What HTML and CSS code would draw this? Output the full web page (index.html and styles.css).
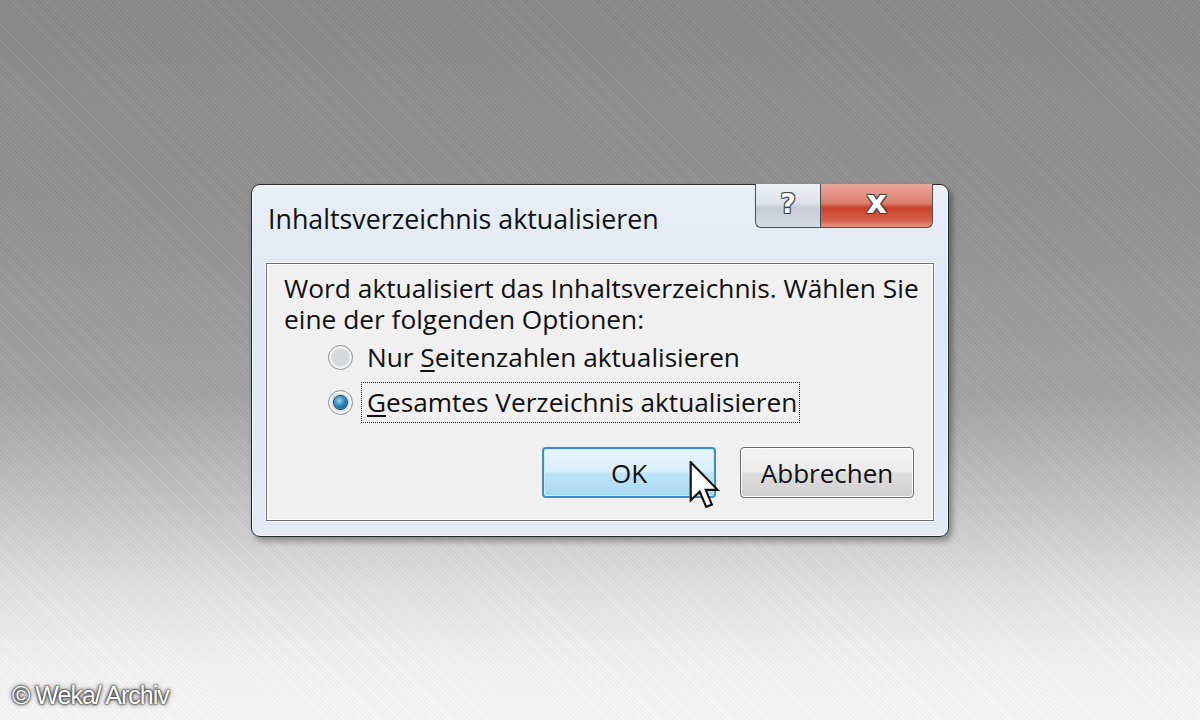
FILE: index.html
```html
<!DOCTYPE html>
<html lang="de">
<head>
    <meta charset="UTF-8">
    <meta name="viewport" content="width=device-width, initial-scale=1.0">
    <title>Inhaltsverzeichnis aktualisieren</title>
    <link rel="stylesheet" href="styles.css">
</head>
<body>
    <div class="window">
        <div class="titlebar">
            <div class="title">Inhaltsverzeichnis aktualisieren</div>
            <div class="controls">
                <div class="ctl-help">?</div>
                <div class="ctl-close">x</div>
            </div>
        </div>
        <div class="client">
            <div class="message">
                <p>Word aktualisiert das Inhaltsverzeichnis. Wählen Sie</p>
                <p>eine der folgenden Optionen:</p>
            </div>
            <div class="options">
                <div class="option">
                    <span class="radio"></span>
                    <span class="label">Nur <u>S</u>eitenzahlen aktualisieren</span>
                </div>
                <div class="option">
                    <span class="radio checked"></span>
                    <span class="label focused"><u>G</u>esamtes Verzeichnis aktualisieren</span>
                </div>
            </div>
            <div class="buttons">
                <div class="btn btn-default">
                    OK
                    <!-- Mauszeiger -->
                    <svg class="cursor" width="32" height="50" viewBox="0 0 13 21">
                        <path d="M0.5 0.5 L0.5 16.5 L4.3 12.9 L7 19.3 L9.4 18.3 L6.8 12.1 L11.8 12.1 Z"
                              fill="#fff" stroke="#111" stroke-width="0.9" stroke-linejoin="miter"/>
                    </svg>
                </div>
                <div class="btn">Abbrechen</div>
            </div>
        </div>
    </div>

    <div class="credit">© Weka/ Archiv</div>
</body>
</html>
```

FILE: styles.css
```css
* {
    margin: 0;
    padding: 0;
    box-sizing: border-box;
}

html, body {
    width: 100%;
    height: 100%;
    overflow: hidden;
}

body {
    font-family: 'Open Sans', 'Noto Sans', sans-serif;
    background-color: #8c8c8c;
    background-image:
        repeating-linear-gradient(45deg, rgba(255,255,255,0.05) 0 1px, rgba(0,0,0,0.03) 1px 3px),
        linear-gradient(to bottom, #8a8a8a 0%, #939393 30%, #a4a4a4 55%, #c6c6c6 70%, #e4e4e4 82%, #f4f4f4 92%, #f8f8f8 100%);
    padding: 184px 0 0 251px;
    position: relative;
}

.window {
    width: 698px;
    height: 353px;
    border: 1px solid #2a2a2a;
    border-radius: 9px;
    background: linear-gradient(to bottom, #e8eef6 0%, #dde7f2 40%, #e2eaf4 100%);
    box-shadow: 3px 4px 6px rgba(0,0,0,0.35), inset 0 0 0 1px #f6f9fc;
    display: flex;
    flex-direction: column;
}

.titlebar {
    height: 78px;
    display: flex;
    justify-content: space-between;
    align-items: flex-start;
    padding: 0 15px 0 16px;
}

.title {
    font-size: 26.8px;
    color: #111;
    margin-top: 15px;
}

.controls {
    display: flex;
    margin-top: -1px;
}

.ctl-help,
.ctl-close {
    height: 44px;
    display: flex;
    align-items: center;
    justify-content: center;
    border: 1px solid #4a4f55;
    border-top: none;
    color: #fff;
    font-family: 'DejaVu Sans', sans-serif;
    font-weight: bold;
    text-shadow: 0 0 1px #333, 1px 1px 0 #444, -1px -1px 0 #444, 1px -1px 0 #444, -1px 1px 0 #444;
}

.ctl-help {
    width: 65px;
    border-radius: 0 0 0 6px;
    border-right: none;
    background: linear-gradient(to bottom, #eef1f5 0%, #dde3ea 45%, #c5ccd5 55%, #d6dce3 100%);
    font-size: 27px;
    padding-bottom: 4px;
}

.ctl-close {
    width: 113px;
    border-radius: 0 0 6px 0;
    background: linear-gradient(to bottom, #eba89b 0%, #dc7d6b 45%, #c9412a 55%, #d8614b 85%, #e49687 100%);
    font-size: 32px;
    padding-bottom: 8px;
}

.client {
    flex: 1;
    margin: 0 14px 15px 14px;
    border: 1px solid #6b6f75;
    box-shadow: inset 0 0 0 1px #fff, 0 0 0 1px #fdfdfd;
    background-color: #f0f0f0;
    padding: 9px 14px 0 17px;
    color: #111;
}

.message {
    font-size: 26.3px;
    line-height: 31px;
    white-space: nowrap;
}

.options {
    padding-left: 44px;
    margin-top: 2px;
    display: flex;
    flex-direction: column;
    gap: 4px;
}

.option {
    display: flex;
    align-items: center;
    gap: 8px;
    font-size: 26.2px;
    height: 41px;
}

.radio {
    width: 25px;
    height: 25px;
    border-radius: 50%;
    border: 1px solid #8b8f94;
    background: radial-gradient(circle at 50% 50%, #d6d8da 0 45%, #eceded 70%, #f8f8f8 100%);
    box-shadow: inset 0 0 0 2px #f4f4f4;
    flex-shrink: 0;
    position: relative;
}

.radio.checked::after {
    content: '';
    position: absolute;
    left: 5px;
    top: 5px;
    width: 13px;
    height: 13px;
    border-radius: 50%;
    background: radial-gradient(circle at 40% 35%, #9fd8f5 0%, #2a8bc4 45%, #0c4d7a 100%);
    box-shadow: 0 0 0 1px #1d3f5a;
}

.label {
    line-height: 33px;
    padding: 3px 2px 3px 5px;
    border: 1px dotted transparent;
    white-space: nowrap;
}

.label.focused {
    border-color: #222;
}

.label u {
    text-underline-offset: 3px;
}

.buttons {
    display: flex;
    justify-content: flex-end;
    gap: 24px;
    margin-top: 24px;
    padding-right: 5px;
}

.btn {
    width: 174px;
    height: 51px;
    border: 1px solid #707070;
    border-radius: 4px;
    box-shadow: inset 0 0 0 1px #fbfbfb;
    background: linear-gradient(to bottom, #f3f3f3 0%, #ebebeb 48%, #dddddd 52%, #cfcfcf 100%);
    display: flex;
    align-items: center;
    justify-content: center;
    font-size: 26px;
    color: #111;
    position: relative;
}

.btn-default {
    border: 2px solid #3c8fc6;
    box-shadow: inset 0 0 0 1px #c8ecfc;
    background: linear-gradient(to bottom, #e8f5fc 0%, #d9effb 48%, #bde4f8 52%, #a9d9f2 100%);
}

.cursor {
    position: absolute;
    left: 145px;
    top: 12px;
}

.credit {
    position: absolute;
    left: 12px;
    bottom: 10px;
    font-family: 'Liberation Sans', Arial, sans-serif;
    font-size: 25px;
    letter-spacing: -1px;
    color: #fff;
    text-shadow: 0 0 2px #222, 0 0 3px #333, 0 0 5px #555;
}
```
